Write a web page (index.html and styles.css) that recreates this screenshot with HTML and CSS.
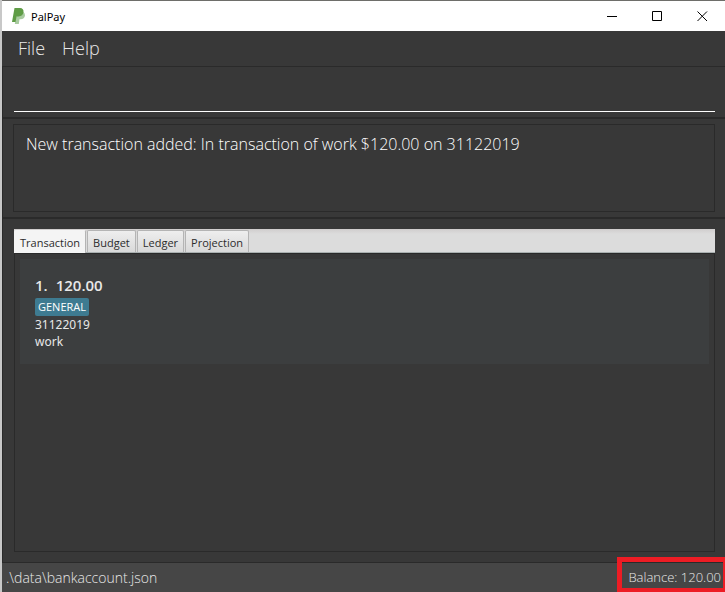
FILE: index.html
```html
<!DOCTYPE html>
<html lang="en">
<head>
<meta charset="utf-8">
<title>PalPay</title>
<link rel="stylesheet" href="styles.css">
</head>
<body>
<div class="window">
  <header class="titlebar">
    <svg class="logo" viewBox="0 0 14 16" aria-hidden="true">
      <path fill="#a9cba0" d="M5 4h6.500Q13 5 13 7.500Q12.500 11 8.500 11.300H7.500L6.800 16H2.800Z"/>
      <path fill="#5f9c46" d="M2.500 0H8Q11.800.3 11.500 4Q11 8.200 6.500 8.500H4.500L3.600 14H0Z"/>
    </svg>
    <h1 class="title">PalPay</h1>
    <div class="controls">
      <button class="control" type="button" aria-label="Minimize"><svg viewBox="0 0 11 11"><path d="M0 5.500H10"/></svg></button>
      <button class="control" type="button" aria-label="Maximize"><svg viewBox="0 0 11 11"><path d="M.5.5H9.500V9.500H.5Z"/></svg></button>
      <button class="control" type="button" aria-label="Close"><svg viewBox="0 0 11 11"><path d="M.5.5L10 10M10 .5L.5 10"/></svg></button>
    </div>
  </header>
  <nav class="menu">
    <button class="menu-item" type="button">File</button>
    <button class="menu-item" type="button">Help</button>
  </nav>
  <form class="command">
    <input class="command-input" type="text" aria-label="Command">
  </form>
  <section class="result">
    <p class="result-text">New transaction added: In transaction of work $120.00 on 31122019</p>
  </section>
  <main class="content">
    <div class="tabs" role="tablist">
      <button class="tab selected" type="button" role="tab" aria-selected="true">Transaction</button>
      <button class="tab" type="button" role="tab" aria-selected="false">Budget</button>
      <button class="tab" type="button" role="tab" aria-selected="false">Ledger</button>
      <button class="tab" type="button" role="tab" aria-selected="false">Projection</button>
    </div>
    <div class="panel" role="tabpanel">
      <article class="card">
        <h2 class="amount"><span>1.</span><span>120.00</span></h2>
        <span class="tag">GENERAL</span>
        <p class="detail">31122019</p>
        <p class="detail">work</p>
      </article>
    </div>
  </main>
  <footer class="status">
    <span class="path">.\data\bankaccount.json</span>
    <span class="balance">Balance: 120.00</span>
  </footer>
</div>
</body>
</html>
```
FILE: styles.css
```css
* { box-sizing: border-box; }

body {
  margin: 0;
  background: #c8c8c8;
  font-family: "Open Sans", "Noto Sans", sans-serif;
}

button {
  margin: 0;
  padding: 0;
  border: 0;
  background: none;
  font: inherit;
  color: inherit;
}

h1, h2, p { margin: 0; font-weight: inherit; }

.window {
  display: flex;
  flex-direction: column;
  min-height: 100vh;
  margin-left: 2px;
  border-top: 1px solid #6e6e6a;
  background: #383838;
  color: #e8e8e8;
}

.titlebar {
  display: flex;
  align-items: center;
  height: 30px;
  padding-left: 10px;
  background: #fff;
  color: #000;
}

.logo { width: 14px; height: 16px; }

.title {
  margin-left: 5px;
  font-family: "Noto Sans", sans-serif;
  font-size: 11px;
}

.controls { display: flex; margin-left: auto; }

.control {
  display: grid;
  place-items: center;
  width: 45px;
  height: 28px;
}

.control svg {
  width: 11px;
  height: 11px;
  fill: none;
  stroke: #000;
}

.menu {
  display: flex;
  gap: 17px;
  height: 36px;
  padding: 0 16px 2px;
  border-bottom: 1px solid #2a2a2a;
  font-size: 18px;
  font-weight: 300;
}

.command {
  height: 52px;
  padding: 8px 10px 0 11px;
  border-bottom: 2px solid #2a2a2a;
  border-left: 1px solid #2a2a2a;
}

.command-input {
  display: block;
  width: 100%;
  height: 37px;
  padding: 0;
  border: 0;
  border-bottom: 1px solid #fff;
  outline: 0;
  background: transparent;
  color: #fff;
  font: 300 16px "Open Sans", sans-serif;
}

.result {
  padding: 5px 10px;
  border-bottom: 2px solid #2a2a2a;
  border-left: 1px solid #2a2a2a;
}

.result-text {
  min-height: 88px;
  padding: 8px 12px;
  border: 1px solid #2a2a2a;
  color: #fff;
  font-size: 16px;
  font-weight: 300;
  line-height: 22px;
}

.content {
  display: flex;
  flex: 1;
  flex-direction: column;
  padding: 10px 10px 10px 11px;
  border-left: 1px solid #2a2a2a;
}

.tabs {
  display: flex;
  gap: 1px;
  height: 24px;
  padding-top: 1px;
  border-bottom: 1px solid #aab0b0;
  background: linear-gradient(#d0cdcd, #dcdcdc 5px);
  color: #2c2c2c;
  font-size: 11px;
}

.tab {
  padding: 1px 5px 0;
  border: 1px solid #b4b4b4;
  border-bottom: 0;
  border-radius: 2px 2px 0 0;
  background: linear-gradient(#eee, #d9d9d9);
}

.selected {
  height: 23px;
  border-color: #f4f4f4 #b4b4b4 #f4f4f4 #f4f4f4;
  background: #f4f4f4;
}

.panel {
  flex: 1;
  padding: 5px;
  border: 1px solid #2a2a2a;
}

.card {
  min-height: 105px;
  padding: 15px 15px 14px;
  background: #3c3e3f;
}

.amount {
  display: flex;
  gap: 8px;
  font-size: 15px;
  font-weight: 600;
  line-height: 22px;
}

.tag {
  display: block;
  width: max-content;
  margin-top: 2px;
  padding: 0 3px;
  border-radius: 2px;
  background: #3e7b91;
  color: #fff;
  font-size: 11px;
  line-height: 18px;
}

.detail {
  font-family: "Noto Sans", sans-serif;
  font-size: 12px;
  line-height: 17px;
}

.status {
  display: flex;
  align-items: center;
  justify-content: space-between;
  height: 30px;
  padding-left: 4px;
  border-top: 1px solid #2a2a2a;
  background: #464646;
  font-size: 14px;
  font-weight: 300;
}

.balance {
  align-self: flex-end;
  height: 35px;
  padding: 0 2px 0 6px;
  border: 5px solid #ed1c24;
  border-width: 5px 2px 4px 5px;
  font-size: 13px;
  line-height: 30px;
}
```
